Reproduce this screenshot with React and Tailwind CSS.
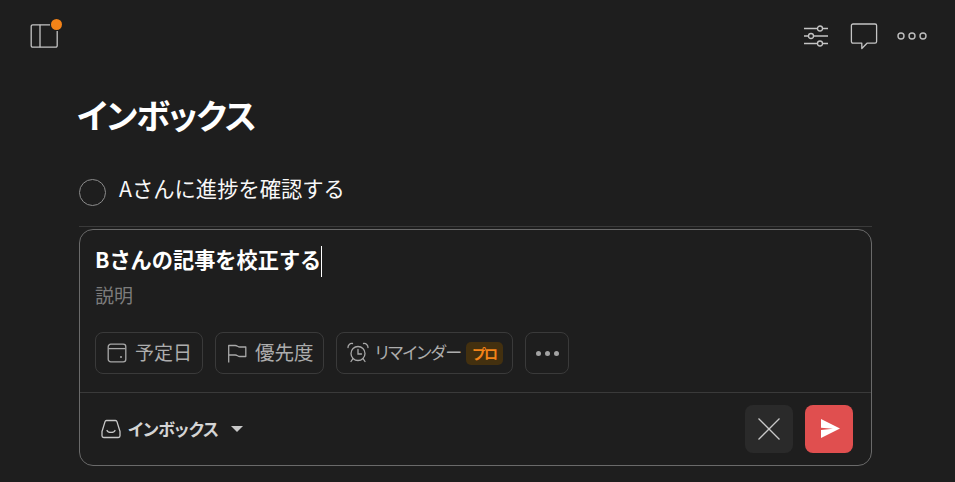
const font = { fontFamily: '"Noto Sans CJK JP", "Liberation Sans", sans-serif' };

const SidebarIcon = () => (
  <div className="relative h-[32px] w-[32px]">
    <svg width="32" height="32" viewBox="0 0 32 32" fill="none" stroke="#c4c4c4" strokeWidth="1.3">
      <path d="M22 4.800H4.700a1.500 1.500 0 0 0-1.500 1.500v19.400a1.500 1.500 0 0 0 1.500 1.500h23a1.500 1.500 0 0 0 1.500-1.500V11" />
      <path d="M12 4.800v22.400" />
    </svg>
    <span className="absolute left-[23px] top-[-1px] h-[11px] w-[11px] rounded-full bg-[#f48318]" />
  </div>
);

const SlidersIcon = () => (
  <svg width="24" height="24" viewBox="0 0 24 24" fill="none" stroke="#c4c4c4" strokeWidth="1.300">
    <path d="M0 4.500h13.500M18.500 4.500H24M0 12h4.500M9.500 12H24M0 19.500h13.500M18.500 19.500H24" />
    <circle cx="16" cy="4.500" r="2.500" />
    <circle cx="7" cy="12" r="2.500" />
    <circle cx="16" cy="19.500" r="2.500" />
  </svg>
);

const CommentIcon = () => (
  <svg width="28" height="28" viewBox="0 0 28 28" fill="none" stroke="#c4c4c4" strokeWidth="1.3" strokeLinejoin="round">
    <path d="M3 2h22a1.600 1.600 0 0 1 1.600 1.600v16a1.600 1.600 0 0 1-1.600 1.600h-8l-5.200 5.300v-5.300H3a1.600 1.600 0 0 1-1.600-1.600v-16A1.600 1.600 0 0 1 3 2z" />
  </svg>
);

const MoreIcon = () => (
  <svg width="30" height="12" viewBox="0 0 30 12" fill="none" stroke="#bdbdbd" strokeWidth="1.4">
    <circle cx="4" cy="6" r="3" />
    <circle cx="15" cy="6" r="3" />
    <circle cx="26" cy="6" r="3" />
  </svg>
);

const CalendarIcon = () => (
  <svg width="20" height="20" viewBox="0 0 20 20" fill="none" stroke="#a8a8a8" strokeWidth="1.3">
    <rect x="1.200" y="1.200" width="17.600" height="17.600" rx="2.600" />
    <path d="M1.500 5.600h17" />
    <circle cx="14" cy="14" r="1" fill="#a8a8a8" stroke="none" />
  </svg>
);

const FlagIcon = () => (
  <svg width="20" height="20" viewBox="0 0 20 20" fill="none" stroke="#a8a8a8" strokeWidth="1.3" strokeLinejoin="round">
    <path d="M1.700 19.500V2.500h6.600c2 0 2.500 1.500 4.500 1.500h6v9.500h-6c-2 0-2.500-1.500-4.500-1.500H1.700" />
  </svg>
);

const AlarmIcon = () => (
  <svg width="22" height="22" viewBox="0 0 22 22" fill="none" stroke="#a8a8a8" strokeWidth="1.3" strokeLinecap="round">
    <circle cx="11" cy="11.500" r="7" />
    <path d="M11 7.500V12H14.500M1 5.500a3.800 3.800 0 0 1 4.500-4M21 5.500a3.800 3.800 0 0 0-4.500-4M5.800 16.800l-1.800 2.700M16.200 16.800l1.800 2.700" />
  </svg>
);

const TrayIcon = () => (
  <svg width="20" height="20" viewBox="0 0 20 20" fill="none" stroke="#c8c8c8" strokeWidth="1.3" strokeLinejoin="round">
    <path d="M5.500 1.500h9a1.500 1.500 0 0 1 1.450 1.100L19 12.500v4.300a1.700 1.700 0 0 1-1.700 1.700H2.700A1.700 1.700 0 0 1 1 16.800v-4.300L4.050 2.600A1.500 1.500 0 0 1 5.500 1.500z" />
    <path d="M6 11.500c1 2.600 7 2.600 8 0" strokeLinecap="round" />
  </svg>
);

const CloseIcon = () => (
  <svg width="24" height="24" viewBox="0 0 24 24" fill="none" stroke="#c8c8c8" strokeWidth="1.300">
    <path d="M1.500 1.500l21 21M22.500 1.500l-21 21" />
  </svg>
);

const SendIcon = () => (
  <svg width="22" height="20" viewBox="0 0 22 20" fill="white">
    <path d="M3 0L22 9.500 3 19v-8L15 9.800 3 8.700z" />
  </svg>
);

const Chip = ({ children, className }) => (
  <div className={`flex h-[42px] items-center rounded-[8px] border border-[#3a3a3a] text-[#adadad] ${className}`}>
    {children}
  </div>
);

const App = () => {
  return (
    <div className="h-[482px] w-[955px] overflow-hidden bg-[#1e1e1e] [font-feature-settings:'palt']" style={font}>
      {/* Top bar */}
      <div className="flex h-[72px] items-center justify-between px-[28px]">
        <SidebarIcon />
        <div className="flex items-center">
          <SlidersIcon />
          <div className="ml-[22px]"><CommentIcon /></div>
          <div className="ml-[19px]"><MoreIcon /></div>
        </div>
      </div>

      <div className="pl-[79px] pr-[83px]">
        <h1 className="ml-[-2px] mt-[18px] text-[34px] font-bold leading-[50px] tracking-[-1.100px] text-white">インボックス</h1>

        {/* Task */}
        <div className="mt-[38px] flex h-[49px] items-start border-b border-[#3a3a3a]">
          <span className="mt-[1px] h-[27px] w-[27px] rounded-full border border-[#8c8c8c]" />
          <span className="ml-[13px] mt-[-3px] text-[21.300px] leading-[26px] text-[#f8f8f8] [font-feature-settings:normal]">Aさんに進捗を確認する</span>
        </div>

        {/* Editor */}
        <div className="mt-[2px] h-[237px] rounded-[14px] border border-[#6a6a6a]">
          <div className="flex h-[163px] flex-col border-b border-[#3a3a3a] px-[15px]">
            <div className="mt-[16px] flex h-[31px] items-center">
              <span className="mb-[6px] text-[21.200px] font-bold leading-[31px] text-white [font-feature-settings:normal]">Bさんの記事を校正する</span>
              <span className="h-[31px] w-px bg-white" />
            </div>
            <div className="mt-[6px] text-[19px] leading-[24px] text-[#7c7c7c]">説明</div>
            <div className="mt-[25px] flex gap-[12px]">
              <Chip className="w-[108px] pl-[11px]">
                <CalendarIcon />
                <span className="mb-[2px] ml-[8px] text-[19px]">予定日</span>
              </Chip>
              <Chip className="w-[109px] pl-[11px]">
                <FlagIcon />
                <span className="mb-[2px] ml-[8px] text-[19.500px]">優先度</span>
              </Chip>
              <Chip className="w-[177px] pl-[10px]">
                <AlarmIcon />
                <span className="mb-[2px] ml-[6px] w-[91px] whitespace-nowrap text-[17px] tracking-[-0.900px]">リマインダー</span>
                <span className="flex h-[23px] w-[37px] items-center justify-center rounded-[5px] bg-[#43300f] text-[14px] font-bold tracking-[-1.500px] text-[#f48318]">プロ</span>
              </Chip>
              <Chip className="w-[44px] justify-center gap-[4px]">
                <span className="h-[5px] w-[5px] rounded-full bg-[#a3a3a3]" />
                <span className="h-[5px] w-[5px] rounded-full bg-[#a3a3a3]" />
                <span className="h-[5px] w-[5px] rounded-full bg-[#a3a3a3]" />
              </Chip>
            </div>
          </div>

          <div className="flex h-[72px] items-center justify-between pl-[21px] pr-[18px]">
            <div className="flex items-center">
              <TrayIcon />
              <span className="ml-[7px] text-[17px] font-bold tracking-[-0.300px] text-[#d4d4d4]">インボックス</span>
              <span className="ml-[12px] h-0 w-0 border-x-[6px] border-t-[6px] border-x-transparent border-t-[#c8c8c8]" />
            </div>
            <div className="flex gap-[12px]">
              <button className="flex h-[48px] w-[48px] items-center justify-center rounded-[8px] bg-[#2a2a2a]">
                <CloseIcon />
              </button>
              <button className="flex h-[48px] w-[48px] items-center justify-center rounded-[8px] bg-[#e04f4f]">
                <SendIcon />
              </button>
            </div>
          </div>
        </div>
      </div>
    </div>
  );
};

export default App;
